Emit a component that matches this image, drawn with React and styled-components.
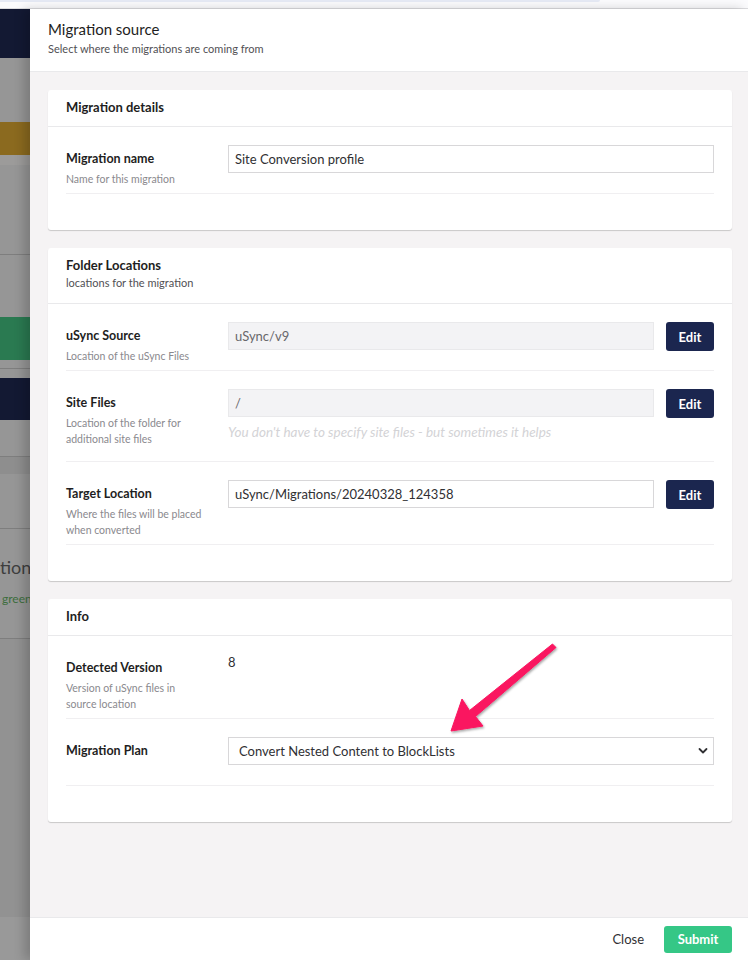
import React from "react";
import styled, { createGlobalStyle } from "styled-components";

const Global = createGlobalStyle`
  html, body { margin: 0; padding: 0; }
  body { font-family: Lato, "Open Sans", "Liberation Sans", sans-serif; background: #fff; }
  * { box-sizing: border-box; }
`;

const Page = styled.div`
  width: 748px;
  height: 960px;
  display: flex;
  flex-direction: column;
  overflow: hidden;
  position: relative;
`;

const TopBar = styled.div`
  height: 9px;
  flex: none;
  background: #fbfbfd;
  border-bottom: 1px solid #dcdcdf;
  padding-right: 148px;
`;

const TopPill = styled.div`
  height: 2px;
  background: #e6eaf5;
  border-radius: 0 0 4px 0;
`;

const Body = styled.div`
  flex: 1;
  display: flex;
  min-height: 0;
`;

const Strip = styled.div`
  width: 30px;
  flex: none;
  display: flex;
  flex-direction: column;
  overflow: hidden;
  background: #969696;
`;

const Band = styled.div`
  flex: none;
  height: ${(p) => p.$h}px;
  background: ${(p) => p.$bg || "#969696"};
  border-bottom: ${(p) => (p.$line ? "1px solid #7e7e7e" : "none")};
`;

const StripText = styled.div`
  flex: none;
  height: 110px;
  padding-top: 26px;
  border-bottom: 1px solid #7e7e7e;
  white-space: nowrap;
`;

const StripHeading = styled.div`
  font-size: 18px;
  color: #3e3e3e;
  line-height: 24px;
`;

const StripGreen = styled.div`
  font-size: 12px;
  color: #3d6e3d;
  margin-top: 12px;
  padding-left: 2px;
`;

const StripFill = styled.div`
  flex: 1;
  background: #929292;
`;

const StripBottom = styled.div`
  flex: none;
  height: 43px;
  background: #999;
`;

const Panel = styled.div`
  flex: 1;
  display: flex;
  flex-direction: column;
  background: #fff;
  position: relative;
  z-index: 1;
  box-shadow: -6px 0 10px rgba(0, 0, 0, 0.18);
`;

const Header = styled.div`
  flex: none;
  height: 63px;
  padding: 11px 18px 0;
  border-bottom: 1px solid #e9e9eb;
`;

const Title = styled.div`
  font-size: 15px;
  line-height: 18px;
  color: #1e1e22;
`;

const Subtitle = styled.div`
  font-size: 11px;
  line-height: 16px;
  margin-top: 3px;
  color: #515054;
`;

const Content = styled.div`
  flex: 1;
  background: #f5f3f4;
  padding: 18px 16px 0 18px;
  display: flex;
  flex-direction: column;
  gap: 18px;
`;

const Card = styled.div`
  background: #fff;
  border-radius: 3px;
  box-shadow: 0 1px 1px rgba(0, 0, 0, 0.18);
`;

const CardHeader = styled.div`
  padding: 9px 18px 11px;
  border-bottom: 1px solid #e9e9eb;
`;

const CardTitle = styled.div`
  font-size: 13px;
  font-weight: 700;
  line-height: 16px;
  color: #1e1e22;
`;

const CardSub = styled.div`
  font-size: 11px;
  line-height: 19px;
  color: #515054;
`;

const CardBody = styled.div`
  padding: 0 18px 36px;
`;

const Row = styled.div`
  display: grid;
  grid-template-columns: 162px 1fr;
  align-items: start;
  padding-top: 18px;
  border-bottom: 1px solid #f0eff1;
`;

const LeftCol = styled.div`
  padding: 6px 0;
`;

const Label = styled.div`
  font-size: 12.5px;
  font-weight: 700;
  line-height: 16px;
  color: #1e1e22;
`;

const Desc = styled.div`
  font-size: 10.5px;
  line-height: 16px;
  margin-top: 4px;
  color: #8a898e;
  max-width: 140px;
`;

const RightCol = styled.div`
  padding-bottom: 20px;
`;

const FieldLine = styled.div`
  display: flex;
  align-items: flex-start;
  gap: 12px;
  height: 28px;
`;

const Input = styled.div`
  flex: 1;
  height: 28px;
  display: flex;
  align-items: center;
  padding: 0 6px;
  font-size: 13px;
  color: ${(p) => (p.$disabled ? "#68676b" : "#303033")};
  background: ${(p) => (p.$disabled ? "#f3f3f5" : "#fff")};
  border: 1px solid ${(p) => (p.$disabled ? "#e9e9eb" : "#d8d7d9")};
`;

const EditButton = styled.button`
  width: 48px;
  height: 29px;
  flex: none;
  border: none;
  border-radius: 3px;
  background: #1b264f;
  color: #fff;
  font-family: inherit;
  font-size: 13px;
  font-weight: 700;
  padding: 0;
`;

const Helper = styled.div`
  margin-top: 6px;
  font-size: 13.5px;
  line-height: 18px;
  font-style: italic;
  color: #d3d3d6;
  white-space: nowrap;
`;

const Value = styled.div`
  font-size: 13px;
  line-height: 16px;
  color: #303033;
`;

const SelectWrap = styled.div`
  position: relative;
  height: 28px;
`;

const Select = styled.div`
  height: 28px;
  display: flex;
  align-items: center;
  padding: 0 10px;
  font-size: 13px;
  color: #303033;
  background: #fff;
  border: 1px solid #d8d7d9;
`;

const Chevron = styled.svg`
  position: absolute;
  right: 6px;
  top: 10px;
`;

const Footer = styled.div`
  flex: none;
  height: 43px;
  border-top: 1px solid #e9e9eb;
  display: flex;
  align-items: center;
  justify-content: flex-end;
  gap: 20px;
  padding-right: 16px;
`;

const CloseBtn = styled.button`
  border: none;
  background: none;
  font-family: inherit;
  font-size: 13px;
  color: #303033;
  padding: 0;
`;

const SubmitBtn = styled.button`
  width: 68px;
  height: 27px;
  border: none;
  border-radius: 3px;
  background: #35c786;
  color: #fff;
  font-family: inherit;
  font-size: 13px;
  font-weight: 700;
  padding: 0;
`;

const ArrowSvg = styled.svg`
  position: absolute;
  left: 440px;
  top: 636px;
  pointer-events: none;
  z-index: 5;
  overflow: visible;
`;

function FieldRow({ label, desc, children }) {
  return (
    <Row>
      <LeftCol>
        <Label>{label}</Label>
        {desc && <Desc>{desc}</Desc>}
      </LeftCol>
      <RightCol>{children}</RightCol>
    </Row>
  );
}

export default function App() {
  const o = (x, y) => `${x - 440},${y - 636}`;
  const arrowPts = [
    o(451, 731),
    o(462, 699),
    o(469.5, 710.5),
    o(552.5, 644),
    o(556, 647.5),
    o(475.5, 716.5),
    o(483, 726),
  ].join(" ");

  return (
    <Page>
      <Global />
      <TopBar>
        <TopPill />
      </TopBar>
      <Body>
        <Strip>
          <Band $h={49} $bg="#131933" />
          <Band $h={64} />
          <Band $h={33} $bg="#8b6a1f" />
          <Band $h={10} $bg="#9c9b9a" />
          <Band $h={90} $line />
          <Band $h={62} />
          <Band $h={43} $bg="#2a7a51" />
          <Band $h={9} $line />
          <Band $h={9} />
          <Band $h={42} $bg="#131933" />
          <Band $h={37} $line />
          <Band $h={17} $bg="#8e8e8e" />
          <Band $h={55} $line />
          <StripText>
            <StripHeading>tions</StripHeading>
            <StripGreen>green</StripGreen>
          </StripText>
          <StripFill />
          <StripBottom />
        </Strip>
        <Panel>
          <Header>
            <Title>Migration source</Title>
            <Subtitle>Select where the migrations are coming from</Subtitle>
          </Header>
          <Content>
            <Card>
              <CardHeader>
                <CardTitle>Migration details</CardTitle>
              </CardHeader>
              <CardBody>
                <FieldRow label="Migration name" desc="Name for this migration">
                  <FieldLine>
                    <Input>Site Conversion profile</Input>
                  </FieldLine>
                </FieldRow>
              </CardBody>
            </Card>

            <Card>
              <CardHeader>
                <CardTitle>Folder Locations</CardTitle>
                <CardSub>locations for the migration</CardSub>
              </CardHeader>
              <CardBody>
                <FieldRow label="uSync Source" desc="Location of the uSync Files">
                  <FieldLine>
                    <Input $disabled>uSync/v9</Input>
                    <EditButton>Edit</EditButton>
                  </FieldLine>
                </FieldRow>
                <FieldRow
                  label="Site Files"
                  desc="Location of the folder for additional site files"
                >
                  <FieldLine>
                    <Input $disabled>/</Input>
                    <EditButton>Edit</EditButton>
                  </FieldLine>
                  <Helper>
                    You don't have to specify site files - but sometimes it helps
                  </Helper>
                </FieldRow>
                <FieldRow
                  label="Target Location"
                  desc="Where the files will be placed when converted"
                >
                  <FieldLine>
                    <Input>uSync/Migrations/20240328_124358</Input>
                    <EditButton>Edit</EditButton>
                  </FieldLine>
                </FieldRow>
              </CardBody>
            </Card>

            <Card>
              <CardHeader>
                <CardTitle>Info</CardTitle>
              </CardHeader>
              <CardBody>
                <FieldRow
                  label="Detected Version"
                  desc="Version of uSync files in source location"
                >
                  <Value>8</Value>
                </FieldRow>
                <FieldRow label="Migration Plan">
                  <SelectWrap>
                    <Select>Convert Nested Content to BlockLists</Select>
                    <Chevron width="10" height="8" viewBox="0 0 10 8">
                      <path
                        d="M1.5 2 L5 5.5 L8.5 2"
                        fill="none"
                        stroke="#303033"
                        strokeWidth="1.8"
                        strokeLinecap="round"
                        strokeLinejoin="round"
                      />
                    </Chevron>
                  </SelectWrap>
                </FieldRow>
              </CardBody>
            </Card>
          </Content>
          <Footer>
            <CloseBtn>Close</CloseBtn>
            <SubmitBtn>Submit</SubmitBtn>
          </Footer>
        </Panel>
      </Body>
      <ArrowSvg width="125" height="105" viewBox="0 0 125 105">
        <defs>
          <filter id="ash" x="-20%" y="-20%" width="140%" height="140%">
            <feDropShadow dx="1" dy="1.5" stdDeviation="1.2" floodColor="#000" floodOpacity="0.35" />
          </filter>
        </defs>
        <polygon
          points={arrowPts}
          fill="#fa1560"
          stroke="#fa1560"
          strokeWidth="1"
          strokeLinejoin="round"
          filter="url(#ash)"
        />
      </ArrowSvg>
    </Page>
  );
}
